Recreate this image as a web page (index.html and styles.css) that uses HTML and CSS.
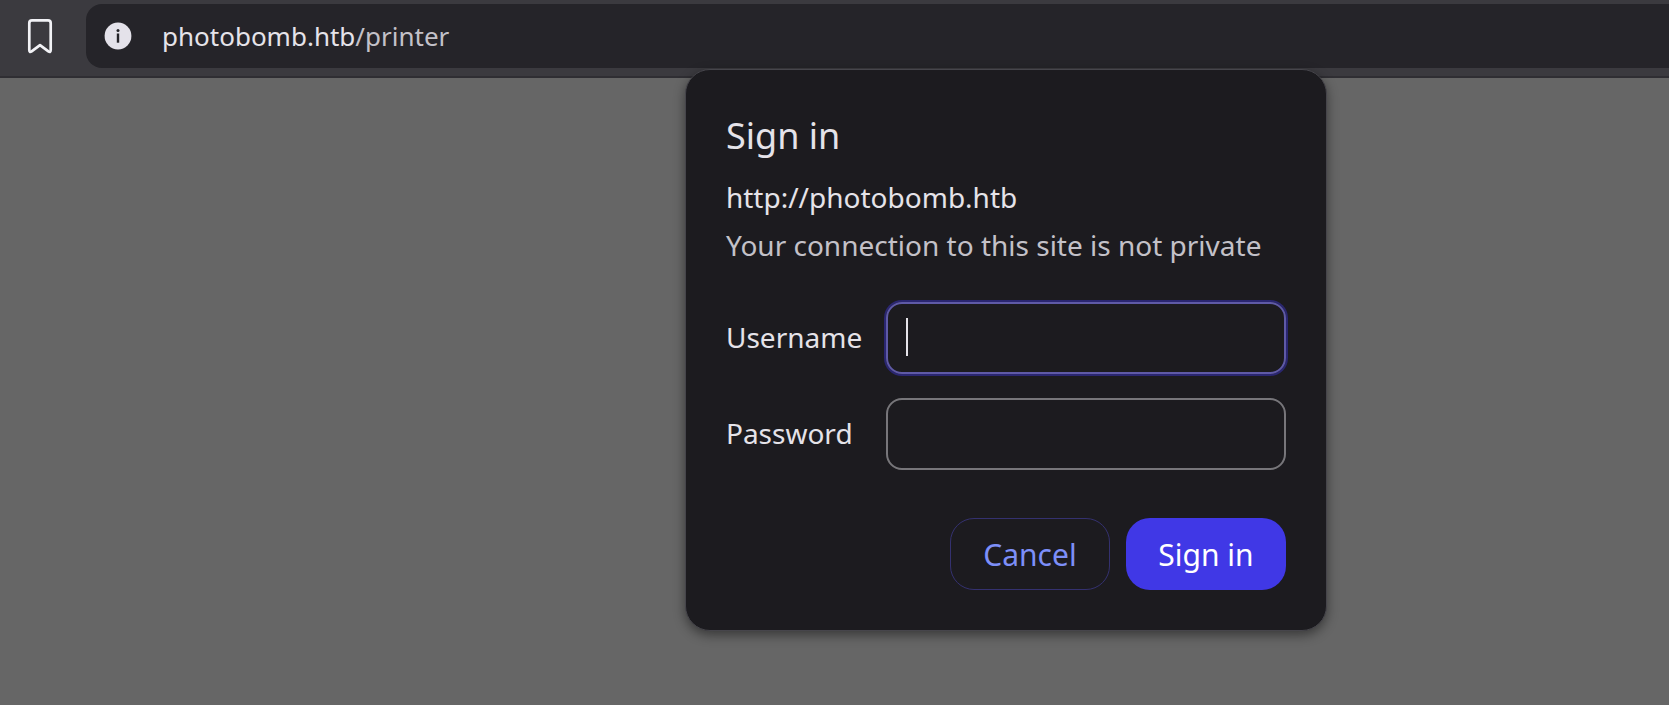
FILE: index.html
```html
<!DOCTYPE html>
<html lang="en">
<head>
<meta charset="utf-8">
<title>Sign in</title>
<link rel="stylesheet" href="styles.css">
</head>
<body>
<header class="toolbar">
  <button class="bookmark" type="button" aria-label="Bookmark this page">
    <svg width="28" height="36" viewBox="0 0 28 36" fill="none" stroke="#f2f2f6" stroke-width="2.7" stroke-linejoin="round" aria-hidden="true">
      <path d="M6 2.400H22Q24.700 2.400 24.700 5.200V32Q24.700 34.800 22.400 33.300L14 27.200L5.600 33.300Q3.300 34.800 3.300 32V5.200Q3.300 2.400 6 2.400Z"/>
    </svg>
  </button>
  <div class="address">
    <button class="site-info" type="button" aria-label="View site information">
      <svg width="28" height="28" viewBox="0 0 28 28" aria-hidden="true">
        <circle cx="14" cy="14" r="13.4" fill="#e4e2ea"/>
        <circle cx="14" cy="8.600" r="1.500" fill="#252429"/>
        <path d="M14 11.500V20.700" stroke="#252429" stroke-width="2.400"/>
      </svg>
    </button>
    <a class="url" href="#">photobomb.htb<span class="url-path">/printer</span></a>
  </div>
</header>
<main class="page">
  <form class="dialog" role="dialog" aria-labelledby="dialog-title">
    <h1 class="title" id="dialog-title">Sign in</h1>
    <p class="origin">http://photobomb.htb</p>
    <p class="warning">Your connection to this site is not private</p>
    <div class="fields">
      <label class="label" for="username">Username</label>
      <div class="field">
        <input class="input input-active" id="username" type="text">
        <span class="caret"></span>
      </div>
      <label class="label" for="password">Password</label>
      <div class="field">
        <input class="input" id="password" type="password">
      </div>
    </div>
    <div class="actions">
      <button class="button button-cancel" type="button">Cancel</button>
      <button class="button button-submit" type="submit">Sign in</button>
    </div>
  </form>
</main>
</body>
</html>
```
FILE: styles.css
```css
* {
  box-sizing: border-box;
}

body {
  display: flex;
  flex-direction: column;
  min-height: 100vh;
  margin: 0;
  background: #666666;
  color: #e5e3e9;
  font-family: "Noto Sans", sans-serif;
  font-size: 28px;
  line-height: 46px;
}

button {
  margin: 0;
  padding: 0;
  border: 0;
  background: none;
  color: inherit;
  font: inherit;
}

svg {
  display: block;
}

.toolbar {
  display: flex;
  align-items: center;
  gap: 32px;
  padding: 4px 0 8px 26px;
  border-bottom: 2px solid #2f2e33;
  background: #3b3a3f;
}

.address {
  display: flex;
  flex: 1;
  align-items: center;
  gap: 30px;
  height: 64px;
  padding-left: 18px;
  border-radius: 16px 0 0 16px;
  background: #252429;
}

.url {
  color: #e5e3e9;
  font-size: 26px;
  text-decoration: none;
}

.url-path {
  color: #c3c1c8;
}

.page {
  flex: 1;
}

.dialog {
  position: absolute;
  top: 69px;
  left: 41.1%;
  width: 642px;
  max-width: 100%;
  margin-left: -1px;
  padding: 40px;
  border: 1px solid #46454b;
  border-radius: 25px;
  background: #1c1b1f;
  box-shadow: 0 4px 12px rgba(0, 0, 0, 0.45);
}

.title {
  margin: 0 0 12px;
  font-size: 36px;
  font-weight: 400;
  line-height: 52px;
}

.origin,
.warning {
  margin: 0 0 2px;
}

.warning {
  color: #c3c1c8;
}

.fields {
  display: grid;
  grid-template-columns: auto 400px;
  gap: 24px;
  align-items: center;
  margin-top: 34px;
}

.label {
  padding-bottom: 2px;
}

.field {
  position: relative;
}

.input {
  display: block;
  width: 100%;
  height: 72px;
  padding: 0 18px;
  border: 2px solid #77767a;
  border-radius: 16px;
  outline: 0;
  background: transparent;
  color: inherit;
  font: inherit;
}

.input-active {
  border-color: #5f5aa6;
  box-shadow: 0 0 0 2px #2a2670;
}

.caret {
  position: absolute;
  top: 16px;
  left: 20px;
  width: 2px;
  height: 38px;
  background: #e5e3e9;
}

.actions {
  display: flex;
  justify-content: flex-end;
  gap: 16px;
  margin-top: 48px;
}

.button {
  width: 160px;
  height: 72px;
  padding-top: 2px;
  border-radius: 24px;
  font-size: 30px;
}

.button-cancel {
  border: 1px solid #34316f;
  color: #7d8ff8;
}

.button-submit {
  background: #4038e6;
  color: #ffffff;
}
```
